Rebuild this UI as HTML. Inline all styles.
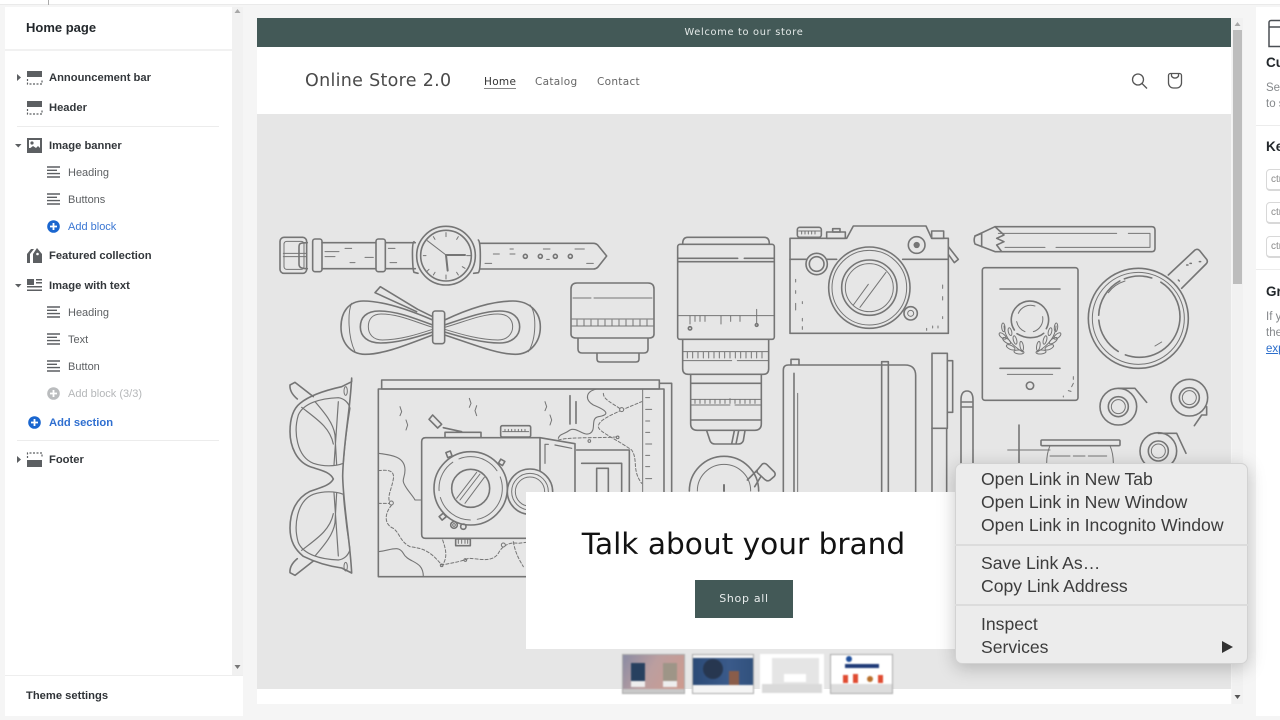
<!DOCTYPE html>
<html><head><meta charset="utf-8"><title>Home page</title>
<style>
html,body{margin:0;padding:0;width:1280px;height:720px;overflow:hidden;background:#f5f5f5}
body{font-family:"Liberation Sans",sans-serif;position:relative;filter:blur(.35px)}
div,span,a{position:absolute;box-sizing:border-box}
.t{white-space:nowrap;line-height:20px;height:20px}
.s{font-weight:bold;font-size:11.2px;color:#33373b;left:49px;margin-top:1px}
.b{font-size:11px;color:#5c5f62;left:68px;margin-top:1px}
.u{font-family:"DejaVu Sans","Liberation Sans",sans-serif}
.m{left:981px;font-size:17.6px;color:#3c3c3c;line-height:23px;height:23px;white-space:nowrap}
.sep{left:955px;width:293px;height:2px;background:#dcdcdc}
.kbd{left:1266px;width:30px;height:22px;border:1px solid #d8d8d8;border-bottom-width:2px;border-radius:4px;background:#fff;font-size:10px;color:#8a8a8a;padding:4px 0 0 4px}
.r{left:1266px;font-size:11.5px;color:#85888b;white-space:nowrap;line-height:16px}
.h{left:1266px;font-size:13.5px;font-weight:bold;color:#23282c;white-space:nowrap;line-height:16px}
.ln{background:#ececec;height:1px}
svg{position:absolute;left:0;top:0}
.th{filter:blur(.8px)}
#ill *{vector-effect:non-scaling-stroke}
</style></head><body>
<div style="left:0;top:0;width:1280px;height:5px;background:#fff;border-bottom:1px solid #eaeaea"></div>
<div style="left:48px;top:0;width:1px;height:5px;background:#aaa"></div>

<!-- sidebar -->
<div style="left:5px;top:7px;width:227px;height:709px;background:#fff"></div>
<div style="left:232px;top:7px;width:11px;height:668px;background:#f1f1f1"></div>
<div style="left:5px;top:49px;width:227px;height:2px;background:#f1f1f1"></div>
<div class="t" style="left:26px;top:18px;font-size:13px;font-weight:bold;color:#23282c">Home page</div>
<div class="t s" style="top:67px">Announcement bar</div>
<div class="t s" style="top:97px">Header</div>
<div class="ln" style="left:17px;top:126px;width:202px"></div>
<div class="t s" style="top:135px">Image banner</div>
<div class="t b" style="top:162px">Heading</div>
<div class="t b" style="top:189px">Buttons</div>
<div class="t b" style="top:216px;color:#3b77d3">Add block</div>
<div class="t s" style="top:245px">Featured collection</div>
<div class="t s" style="top:275px">Image with text</div>
<div class="t b" style="top:302px">Heading</div>
<div class="t b" style="top:329px">Text</div>
<div class="t b" style="top:356px">Button</div>
<div class="t b" style="top:383px;color:#b5b7b9">Add block (3/3)</div>
<div class="t s" style="top:412px;color:#2f6fd0">Add section</div>
<div class="ln" style="left:17px;top:440px;width:202px"></div>
<div class="t s" style="top:449px">Footer</div>
<div style="left:5px;top:675px;width:238px;height:41px;background:#fff;border-top:1px solid #eee"></div>
<div class="t" style="left:26px;top:686px;font-size:11.2px;font-weight:bold;color:#2f3337">Theme settings</div>

<svg width="243" height="720" style="z-index:2">
<g fill="#5c5f62">
<path d="M17 74l4 3.500-4 3.500zM17 456l4 3.500-4 3.500zM15 144l6.500 0-3.200 3.500zM15 284l6.500 0-3.200 3.500z"/>
<rect x="27" y="71" width="15" height="6"/><rect x="27" y="101" width="15" height="6"/><rect x="27" y="460" width="15" height="7"/>
<rect x="27" y="138" width="15" height="15"/>
<path d="M31 249h3l-4 5v9h-3v-9zM37 248l5 6v9h-9v-9z"/>
<rect x="27" y="279" width="7" height="6"/><rect x="36" y="279" width="6" height="1.500"/><rect x="36" y="282" width="6" height="1.500"/><rect x="27" y="286" width="15" height="1.500"/><rect x="27" y="289.500" width="15" height="1.500"/>
</g>
<rect x="29" y="140" width="11" height="8" fill="#fff"/><circle cx="32" cy="143" r="1.600" fill="#5c5f62"/><path d="M29 149l4-3 3 2 2-2 2 2v3h-11z" fill="#5c5f62"/>
<circle cx="37.500" cy="254" r="1.300" fill="#fff"/>
<g stroke="#5c5f62" stroke-width="1.200" stroke-dasharray="2 1.500" fill="none">
<path d="M27.500 79v5h14.500V79M27.500 109v5h14.500V109M27.500 458v-5h14.500v5"/>
</g>
<g stroke="#5c5f62" stroke-width="1.400" fill="none">
<path d="M47 167h13M47 170.300h10M47 173.600h13M47 177h13M47 194h13M47 197.300h10M47 200.600h13M47 204h13M47 307h13M47 310.300h10M47 313.600h13M47 317h13M47 334h13M47 337.300h10M47 340.600h13M47 344h13M47 361h13M47 364.300h10M47 367.600h13M47 371h13"/>
</g>
<circle cx="53.500" cy="226.500" r="6.300" fill="#1a66cf"/><path d="M50 226.500h7M53.500 223v7" stroke="#fff" stroke-width="1.800"/>
<circle cx="53.500" cy="393.500" r="6.300" fill="#babcbe"/><path d="M50 393.500h7M53.500 390v7" stroke="#fff" stroke-width="1.800"/>
<circle cx="34.500" cy="422.500" r="6.300" fill="#1a66cf"/><path d="M31 422.500h7M34.500 419v7" stroke="#fff" stroke-width="1.800"/>
<path d="M234.500 13l3-4 3 4z" fill="#a8a8a8"/><path d="M234.500 665l3 4 3-4z" fill="#777"/>
</svg>

<!-- preview -->
<div style="left:257px;top:18px;width:974px;height:686px;background:#fff"></div>
<div style="left:257px;top:114px;width:974px;height:575px;background:#e6e6e6"></div>
<div style="left:257px;top:18px;width:974px;height:29px;background:#435957"></div>
<div class="t u" style="left:257px;width:974px;top:23px;text-align:center;font-size:9.800px;letter-spacing:.7px;color:#e4e9e8">Welcome to our store</div>
<div class="t u" style="left:305px;top:71px;font-size:17.500px;color:#4a4a4a;letter-spacing:.3px">Online Store 2.0</div>
<div class="t u" style="left:484px;top:72px;font-size:10.500px;color:#333;letter-spacing:.3px">Home</div>
<div style="left:484px;top:88px;width:32px;height:1px;background:#888"></div>
<div class="t u" style="left:535px;top:72px;font-size:10.500px;color:#666;letter-spacing:.3px">Catalog</div>
<div class="t u" style="left:597px;top:72px;font-size:10.500px;color:#666;letter-spacing:.3px">Contact</div>
<svg width="1280" height="720" fill="none" stroke="#555" stroke-width="1.300">
<circle cx="1138" cy="79.500" r="5.500"/><path d="M1142 83.500l5 5"/>
<path d="M1168.500 75.500a2 2 0 0 1 2-2h9a2 2 0 0 1 2 2v7.500a5 5 0 0 1-5 5h-3a5 5 0 0 1-5-5zM1171.500 74v2a4 4 0 0 0 7 0v-2"/>
</svg>

<!-- illustration -->
<svg id="ill" width="1280" height="720" fill="none" stroke="#757575" stroke-width="1.600" stroke-linecap="round" stroke-linejoin="round">
<!-- watch and bow -->
<g transform="translate(270,220) scale(.33333)">
<rect x="30" y="52" width="80" height="108" rx="12"/><rect x="42" y="64" width="60" height="84" rx="8" stroke-width="1"/>
<path d="M40 100h70M40 110h70" stroke-width="1"/><path d="M112 68c-25 0-25 4-25 14v50c0 10 5 14 25 14"/>
<rect x="128" y="57" width="28" height="98" rx="7" fill="#e6e6e6"/>
<path d="M156 68h162M156 146h162M346 68h90M346 146h90"/><rect x="318" y="57" width="28" height="98" rx="7" fill="#e6e6e6"/>
<path d="M165 95h42M165 110h30M225 85h20M240 128h15M285 112h25M355 85h20M360 128h20M670 102h18M720 87h10M720 102h15M645 130h20M820 87h20M915 87h28M830 118h8M950 130h20" stroke-width="1"/>
<path d="M432 65c-8 5-4 85 0 92l12 3M625 60c8 5 8 90 0 98l-14 2"/><circle cx="528" cy="107" r="88" fill="#e6e6e6"/><circle cx="528" cy="107" r="76"/>
<path d="M528 38v12M528 165v12M460 107h8M590 107h12M490 50l5 8M565 50l-5 8M585 145l-8-5M470 155l7-7M490 165l5-8M565 165l-5-8" stroke-width="1"/>
<path d="M472 62l56 43" stroke-width="1"/><path d="M528 105h57M528 105l5 47" stroke-width="2"/>
<path d="M630 70h340q8 0 14 6l26 32-26 33q-6 6-14 6H630"/><circle cx="766" cy="109" r="6"/><circle cx="811" cy="109" r="6"/><circle cx="856" cy="109" r="6"/><circle cx="901" cy="109" r="6"/>
<path d="M488 300C400 262 330 243 280 243c-45 0-67 35-67 78 0 45 27 82 72 82 60 0 135-33 203-58M524 300c80-38 150-57 205-57 50 0 82 33 82 78s-30 82-75 82c-55 0-135-33-212-58"/>
<path d="M488 315c-60-22-110-42-160-42-40 0-57 20-57 48s22 48 60 48c50 0 100-15 157-33M524 315c65-22 120-42 165-42 40 0 60 20 60 48s-25 48-60 48c-50 0-105-15-165-33"/>
<path d="M488 322c-50-15-100-40-155-40-25 0-38 15-38 38s15 40 42 40c50 0 100-15 151-32M524 322c55-15 110-40 160-40 28 0 44 15 44 38s-18 40-44 40c-50 0-105-15-160-32M245 250c-12 25-12 100 10 145M780 255c20 25 20 100-5 140" stroke-width="1"/>
<path d="M440 275L315 218l16-18 112 68 45 22"/><rect x="488" y="273" width="36" height="98" rx="8" fill="#e6e6e6"/>
</g>
<!-- small lens -->
<g transform="translate(570,281)"><path d="M1 8q0-6 6-6h71q6 0 6 6v45q0 4-5 4H6q-5 0-5-4zM8 57v11q0 4 4 4h62q4 0 4-4V57M27 72v6q0 3 3 3h36q3 0 3-3v-6"/><path d="M3 17h18M24 17h58M2 38h81M2 45h81M7 39v6M14 39v6M21 39v6M28 39v6M35 39v6M42 39v6M49 39v6M56 39v6M63 39v6M70 39v6M77 39v6" stroke-width="1"/></g>
<!-- big lens, camera, notebook, pen -->
<g transform="translate(660,220) scale(.33333)">
<path d="M68 72q0-20 15-20h230q15 0 15 20"/><rect x="53" y="73" width="290" height="285" rx="7"/>
<path d="M55 115h178M253 115h88M55 125h286"/><path d="M55 287h286" stroke-width="1"/><path d="M90 287v25M105 287v17M120 287v17M135 287v17M183 287v25M212 287v17M240 287v17M290 268v44" stroke-width="1"/>
<circle cx="90" cy="325" r="5"/><circle cx="290" cy="315" r="4"/>
<path d="M68 358v88q0 17 17 17h225q16 0 16-17v-88"/><path d="M68 395h258M68 422h147M232 422h94M82 397v17M98 397v17M114 397v17M130 397v17M146 397v17M162 397v17M178 397v17M194 397v17M210 397v17M226 397v17M242 397v17M258 397v17M274 397v17M290 397v17M306 397v17" stroke-width="1"/>
<path d="M92 463v148q0 20 20 20h172q20 0 20-20V463M92 490h212M92 600h212"/><path d="M95 538h206M95 555h115M225 555h78M105 540v10M120 540v10M135 540v10M150 540v10M165 540v10M180 540v10M195 540v10M210 536v14M225 540v10M240 540v10M255 540v10M270 540v10M285 540v10" stroke-width="1"/>
<path d="M140 632l10 30q4 10 15 10h70q11 0 15-10l5-30M215 672l8-40M228 672l8-40"/>
<path d="M390 55h170l20-37h218l17 37h50v285H390z"/><path d="M390 118h140M728 118h137"/>
<rect x="412" y="22" width="72" height="30" rx="7"/><path d="M416 33h64M425 34v8M435 34v8M445 34v8M455 34v8M465 34v8" stroke-width="1"/><rect x="500" y="36" width="56" height="19"/><rect x="518" y="26" width="22" height="10"/><rect x="815" y="33" width="36" height="22"/>
<path d="M865 80l30 38-12 10-18-25"/>
<circle cx="470" cy="132" r="32" fill="#e6e6e6"/><circle cx="470" cy="132" r="22"/><circle cx="770" cy="75" r="25"/><circle cx="770" cy="75" r="7" fill="#777"/>
<circle cx="628" cy="203" r="122" fill="#e6e6e6"/><circle cx="628" cy="203" r="112" stroke-width="1"/><circle cx="628" cy="203" r="83"/><circle cx="628" cy="203" r="72" stroke-width="1"/>
<path d="M580 255l45-62M600 262l78-105" stroke-width="1"/><circle cx="752" cy="280" r="20" fill="#e6e6e6"/><circle cx="752" cy="280" r="9" stroke-width="1"/>
<path d="M407 178v8M407 212v8M407 250v20M427 245v6M427 295v8M427 320v8M848 195v10M848 230v10M848 290v6M800 325v6M818 318v6M834 318v6" stroke-width="1"/>
<path d="M370 815V450q0-15 15-15h350q32 0 32 32v348"/><path d="M393 435v-17h24v17M402 460v355" /><path d="M413 520v295" stroke-width="1"/>
<path d="M665 815V425h20v390"/><rect x="816" y="400" width="46" height="225"/><path d="M862 422h16v155h-16M816 625v190M860 625v190"/>
</g>
<path d="M961 491V400q0-9 6-9 6 0 6 9v91M961 402h12M961 407h12"/>
<!-- stopwatch -->
<g transform="translate(670,430) scale(.33333)"><path d="M58 183a103 103 0 0 1 208 0"/><path d="M82 183a80 80 0 0 1 160 0" stroke-width="1"/><path d="M162 165v18" stroke-width="2"/><path d="M232 150l30-30 14 14-22 36"/><path d="M262 120l15-18q8-4 14 2l22 22q5 7 0 13l-14 12q-7 4-14-2l-24-22z" fill="#e6e6e6"/></g>
<!-- pencil, passport, mug, tape -->
<g transform="translate(970,220) scale(.33333)">
<path d="M75 20H545q10 0 10 10V85q0 10-10 10H75L15 72Q10 60 15 48z"/><path d="M15 48l20-8v40M75 20l27 25-22 10 22 10-22 10 15 20"/>
<path d="M85 40H440M475 40H540V82H258M105 82H225" stroke-width="1"/>
<rect x="37" y="143" width="287" height="398" rx="8"/><path d="M90 207H270M90 445H270"/><path d="M112 463H248" stroke-width="1"/><circle cx="180" cy="497" r="11"/>
<path d="M133 330a56 56 0 1 1 96-4M221 340q-15 13-40 13-20 0-40-12" /><path d="M145 280a40 40 0 0 1 50-22M218 290a40 40 0 0 1-28 45M165 335q-20-8-25-30" stroke-width="1"/>
<g stroke-width="1">
<path d="M102 318q2 45 56 78M258 318q-2 45-56 78"/>
<ellipse cx="100" cy="322" rx="5" ry="13" transform="rotate(-5 100 322)"/><ellipse cx="98" cy="348" rx="6" ry="13" transform="rotate(-50 98 348)"/><ellipse cx="110" cy="362" rx="6" ry="14" transform="rotate(-55 110 362)"/><ellipse cx="122" cy="382" rx="6" ry="14" transform="rotate(-65 122 382)"/><ellipse cx="147" cy="396" rx="6" ry="15" transform="rotate(-85 147 396)"/><ellipse cx="120" cy="335" rx="5" ry="12" transform="rotate(-15 120 335)"/><ellipse cx="135" cy="360" rx="5" ry="13" transform="rotate(-15 135 360)"/><ellipse cx="155" cy="378" rx="5" ry="14" transform="rotate(-10 155 378)"/>
<ellipse cx="258" cy="322" rx="5" ry="13" transform="rotate(5 258 322)"/><ellipse cx="262" cy="348" rx="6" ry="13" transform="rotate(50 262 348)"/><ellipse cx="250" cy="362" rx="6" ry="14" transform="rotate(55 250 362)"/><ellipse cx="238" cy="382" rx="6" ry="14" transform="rotate(65 238 382)"/><ellipse cx="213" cy="396" rx="6" ry="15" transform="rotate(85 213 396)"/><ellipse cx="240" cy="335" rx="5" ry="12" transform="rotate(15 240 335)"/><ellipse cx="225" cy="360" rx="5" ry="13" transform="rotate(15 225 360)"/><ellipse cx="205" cy="378" rx="5" ry="14" transform="rotate(10 205 378)"/>
</g>
<path d="M305 500l5-10M295 512l8 2M310 470v8M280 528v3" stroke-width="1"/>
<path d="M595 165L675 90q8-5 14 2l21 26q5 8-2 14L635 205"/><circle cx="505" cy="295" r="150" fill="#e6e6e6"/><circle cx="505" cy="295" r="138" stroke-width="1"/><circle cx="508" cy="290" r="122" stroke-dasharray="78 8 38 5 42 5 28 10"/>
<path d="M415 218q18-25 50-35M555 378l20-12" stroke-width="1"/><path d="M650 135l4 0M660 130l4 0M625 180l3 3M688 125l4 0" stroke-width="1.500"/>
<circle cx="445" cy="560" r="55"/><circle cx="445" cy="560" r="30"/><circle cx="445" cy="560" r="21" stroke-width="1"/><path d="M445 505h50l35 42"/>
<circle cx="658" cy="533" r="55"/><circle cx="658" cy="533" r="30"/><circle cx="658" cy="533" r="21" stroke-width="1"/><path d="M710 560v25h-15l-22 32"/>
<circle cx="565" cy="693" r="55"/><circle cx="565" cy="693" r="30"/><circle cx="565" cy="693" r="21" stroke-width="1"/><path d="M565 640h55l28 60"/>
<path d="M147 615V810" /><path d="M113 690H240" stroke-width="1"/><rect x="213" y="660" width="237" height="17" rx="3"/><path d="M240 677Q230 700 230 730M420 677Q430 700 430 730M240 708H300M310 708H345M355 708H410" stroke-width="1"/>
</g>
<!-- glasses, map -->
<g transform="translate(280,375) scale(.33333)">
<path d="M30 30l15-8 55 43M30 30q-2 22 22 42"/><path d="M30 593l15 8 55-43M30 593q-2-22 22-42"/>
<path d="M215 20l-30 15C140 45 90 60 60 85 35 105 30 140 30 170c0 45 20 90 60 105 30 10 60 15 70 37-10 20-40 26-70 37-40 20-60 60-60 110 0 40 15 65 40 85 40 20 80 30 115 35l30 15c-5-100-25-200-27-291 2-100 22-190 27-294z"/>
<path d="M175 68c-55 2-105 17-120 52-15 50-5 125 45 145 30 10 65 10 90 0 5-65 15-135 20-165-5-20-20-30-35-32zM175 555c-55-2-105-17-120-52-15-50-5-125 45-145 30-10 65-10 90 0 5 65 15 135 20 165-5 20-20 30-35 32z" stroke-width="1.200"/>
<path d="M105 80c30 35 55 65 60 100l5 90M175 80l-13 190M65 97c45 35 85 60 95 110M105 543c30-35 55-65 60-100l5-90M175 543l-13-190M65 526c45-35 85-60 95-110" stroke-width="1.200"/>
<ellipse cx="197" cy="48" rx="5" ry="13" stroke-width="1"/><ellipse cx="197" cy="575" rx="5" ry="13" stroke-width="1"/>
<path d="M1138 25h37v580"/><rect x="305" y="15" width="833" height="27"/><rect x="295" y="42" width="857" height="563"/><path d="M1088 42V350" stroke-width="1"/><path d="M1097 68h12M1097 103h18M1097 138h12M1097 172h12M1097 207h18M1097 241h12M1097 275h12M1097 311h18" stroke-width="1"/>
<path d="M950 42c-35 8-35 33-10 48 50 20 45 30 15 35-25 5-5 40-25 50-20 10-40-20-60-10-20 15-30 10-35 25" stroke-width="1.100"/>
<path d="M970 55c0 20 30 30 55 50l60-25M1025 105c-30 15-70 30-70 50 0 15 50 35 100 70 20 30 0 60 30 100M835 195c30-10 150-5 180-10" stroke-width="1" stroke-dasharray="3 2"/>
<circle cx="1025" cy="104" r="6" stroke-width="1" fill="#e6e6e6"/><circle cx="928" cy="198" r="4" stroke-width="1"/><circle cx="1013" cy="187" r="4" stroke-width="1"/>
<path d="M295 235c40 5 80 10 80 50 0 30-15 25 5 55 10 15 20 25 25 35h18" stroke-width="1.100"/>
<path d="M295 287c25-3 50-3 45 25-5 30-20 55-10 70M295 385h40M335 390c-25 30-20 60 5 70 20 15 20 40 50 55 30 5 55 5 95 55 25-5 60-10 80-20 30 0 70 15 90-15 10-20 30-35 60-30l40-5M488 495c10 30 15 50 0 75M700 500c5 30 15 50 30 75" stroke-width="1" stroke-dasharray="3 2"/>
<circle cx="334" cy="384" r="6" stroke-width="1" fill="#e6e6e6"/><circle cx="485" cy="571" r="4" stroke-width="1"/><circle cx="556" cy="555" r="4" stroke-width="1"/><circle cx="670" cy="510" r="6" stroke-width="1" fill="#e6e6e6"/>
<path d="M295 530c40-5 60-20 75 5 15 30 60 20 60 70" stroke-width="1.100"/>
<path d="M360 95l5 15-5 12M378 135l5 15-5 15M568 70l5 15-5 12M590 92l-5 15 5 15M795 80l5 15-5 12M810 120l5 15-5 15" stroke-width="1" />
<path d="M870 62v85M888 80v65"/>
<path d="M890 225H1048V480H890M905 265H1025V480M950 280H985V480M950 280V480"/>
<path d="M425 200q0-12 12-12H780l105 18V490H437q-12 0-12-12z" fill="#e6e6e6"/><path d="M780 188V490"/><path d="M795 265V208h10M825 210l50 10" stroke-width="1.200"/>
<path d="M447 133l11-13 27 28-12 11zM490 158l55 12"/><rect x="495" y="172" width="108" height="16"/><rect x="662" y="152" width="90" height="34" rx="5"/><path d="M668 170h78M675 163v7M685 163v7M695 163v7M705 163v7M715 163v7M725 163v7M735 163v7" stroke-width="1"/>
<circle cx="750" cy="350" r="68" fill="#e6e6e6"/><circle cx="750" cy="350" r="55" stroke-width="1"/><circle cx="750" cy="350" r="44" stroke-width="1"/>
<circle cx="572" cy="340" r="110" fill="#e6e6e6"/><circle cx="572" cy="340" r="95" stroke-width="1" stroke-dasharray="43 7 40 7 33 7"/><circle cx="572" cy="340" r="57"/>
<path d="M530 370l60-78M555 385l58-78M540 375l60-78" stroke-width="1"/>
<rect x="500" y="230" width="14" height="16" transform="rotate(-20 507 238)"/><rect x="658" y="255" width="14" height="14" transform="rotate(30 665 262)"/><rect x="480" y="418" width="16" height="14" transform="rotate(-40 488 425)"/>
<circle cx="522" cy="450" r="10"/><circle cx="522" cy="450" r="4" stroke-width="1"/><circle cx="550" cy="455" r="8"/><rect x="527" y="492" width="44" height="20"/><path d="M535 495v10M545 495v10M555 495v10M563 495v10" stroke-width="1"/>
</g>
</svg>

<!-- banner card -->
<div style="left:526px;top:492px;width:437px;height:157px;background:#fff"></div>
<div class="t u" style="left:526px;width:435px;top:524px;height:40px;line-height:40px;text-align:center;font-size:29.600px;color:#121212">Talk about your brand</div>
<div style="left:695px;top:580px;width:98px;height:38px;background:#435957"></div>
<div class="t u" style="left:695px;width:98px;top:589px;text-align:center;font-size:11px;letter-spacing:.7px;color:#e8ecec">Shop all</div>

<!-- thumbnails -->
<div class="th" style="left:622px;top:654px;width:63px;height:40px;border:1px solid #aaa;background:#c9c9c9;overflow:hidden"><div style="left:0;top:0;width:61px;height:34px;background:linear-gradient(120deg,#8a8ba3 0,#bb9e9f 45%,#cf9a8e 100%)"></div><div style="left:8px;top:8px;width:14px;height:24px;background:#27405f;border-bottom:6px solid #eee"></div><div style="left:40px;top:8px;width:14px;height:24px;background:#9e9587;border-bottom:6px solid #eee"></div></div>
<div class="th" style="left:692px;top:654px;width:62px;height:40px;border:1px solid #aaa;background:#f5f5f5;overflow:hidden"><div style="left:0;top:3px;width:60px;height:27px;background:linear-gradient(90deg,#2b4a76,#3a5a8a 60%,#31517d)"></div><div style="left:10px;top:4px;width:20px;height:20px;background:#273750;border-radius:50%"></div><div style="left:36px;top:16px;width:10px;height:14px;background:#8a5d4a"></div></div>
<div class="th" style="left:760px;top:654px;width:64px;height:39px;background:#fff;overflow:hidden"><div style="left:12px;top:4px;width:47px;height:27px;background:#e5e5e5"></div><div style="left:2px;top:30px;width:60px;height:9px;background:#dadada"></div><div style="left:24px;top:20px;width:22px;height:8px;background:#fff"></div></div>
<div class="th" style="left:830px;top:654px;width:63px;height:40px;border:1px solid #aaa;background:#fff;overflow:hidden"><div style="left:0;top:29px;width:61px;height:10px;background:#ddd"></div><div style="left:14px;top:9px;width:34px;height:4px;background:#1f3b78"></div><div style="left:15px;top:1px;width:6px;height:6px;border-radius:50%;background:#1f4f9c"></div><div style="left:12px;top:20px;width:5px;height:8px;background:#e04a30"></div><div style="left:22px;top:19px;width:5px;height:9px;background:#e04a30"></div><div style="left:36px;top:21px;width:6px;height:6px;border-radius:50%;background:#b86f2a"></div><div style="left:47px;top:20px;width:5px;height:8px;background:#e04a30"></div></div>

<!-- scrollbar -->
<div style="left:1232px;top:18px;width:11px;height:686px;background:#f1f1f1"></div>
<div style="left:1233px;top:30px;width:9px;height:254px;background:#bdbdbd"></div>
<svg width="1280" height="720" style="z-index:3"><path d="M1234.500 26l3-4 3 4z" fill="#a8a8a8"/><path d="M1234.500 695l3 4 3-4z" fill="#555"/></svg>

<!-- right panel -->
<div style="left:1256px;top:7px;width:24px;height:709px;background:#fff;overflow:hidden">
<div class="ln" style="left:0;top:118px;width:24px"></div><div class="ln" style="left:0;top:262px;width:24px"></div>
</div>
<svg width="1280" height="720" style="z-index:3" fill="none" stroke="#4a4f54" stroke-width="1.500"><path d="M1281 20.500h-10a2 2 0 0 0-2 2v24h11M1269 27h12"/></svg>
<div class="h" style="top:55px;z-index:4">Cu</div>
<div class="r" style="top:80px;z-index:4">Sel</div>
<div class="r" style="top:96px;z-index:4">to s</div>
<div class="h" style="top:139px;z-index:4">Ke</div>
<div class="kbd" style="top:169px;z-index:4">ctrl</div>
<div class="kbd" style="top:202px;z-index:4">ctrl</div>
<div class="kbd" style="top:236px;z-index:4">ctrl</div>
<div class="h" style="top:284px;z-index:4">Gr</div>
<div class="r" style="top:309px;z-index:4">If y</div>
<div class="r" style="top:325px;z-index:4">the</div>
<div class="r" style="top:341px;z-index:4;color:#2c6ecb;text-decoration:underline">exp</div>

<!-- context menu -->
<div style="left:955px;top:463px;width:293px;height:201px;background:#ececec;border-radius:7px;border:1px solid #d2d2d2;box-shadow:0 4px 18px rgba(0,0,0,.22);z-index:5"></div>
<div style="z-index:6;left:0;top:0;width:1280px;height:720px">
<div class="m" style="top:468px">Open Link in New Tab</div>
<div class="m" style="top:491px">Open Link in New Window</div>
<div class="m" style="top:514px">Open Link in Incognito Window</div>
<div class="sep" style="top:544px"></div>
<div class="m" style="top:552px">Save Link As…</div>
<div class="m" style="top:575px">Copy Link Address</div>
<div class="sep" style="top:604px"></div>
<div class="m" style="top:613px">Inspect</div>
<div class="m" style="top:636px">Services</div>
<svg width="1280" height="720"><path d="M1222 641l11 6-11 6z" fill="#333"/></svg>
</div>
</body></html>
